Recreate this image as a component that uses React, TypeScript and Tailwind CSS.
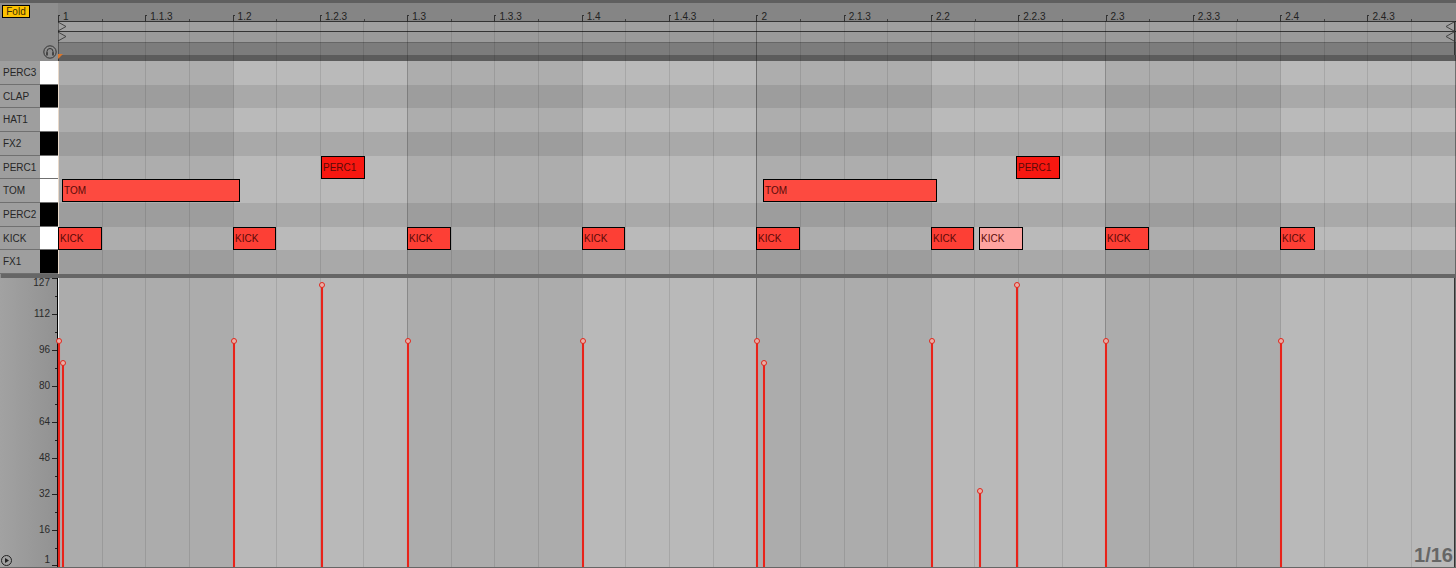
import React from 'react';

const font = { fontFamily: '"Liberation Sans", Arial, sans-serif' };

const COL = 43.65;
const ORIGIN = 58;

const marks = ['1', '1.1.3', '1.2', '1.2.3', '1.3', '1.3.3', '1.4', '1.4.3', '2', '2.1.3', '2.2', '2.2.3', '2.3', '2.3.3', '2.4', '2.4.3'];

const rows = [
  { name: 'PERC3', black: false },
  { name: 'CLAP', black: true },
  { name: 'HAT1', black: false },
  { name: 'FX2', black: true },
  { name: 'PERC1', black: false },
  { name: 'TOM', black: false },
  { name: 'PERC2', black: true },
  { name: 'KICK', black: false },
  { name: 'FX1', black: true },
];

const notes = [
  { row: 4, x: 321, w: 44, label: 'PERC1', color: 'bg-[#f81710]' },
  { row: 4, x: 1016, w: 44, label: 'PERC1', color: 'bg-[#f81710]' },
  { row: 5, x: 62, w: 178, label: 'TOM', color: 'bg-[#fd4a40]' },
  { row: 5, x: 763, w: 174, label: 'TOM', color: 'bg-[#fd4a40]' },
  { row: 7, x: 58, w: 44, label: 'KICK', color: 'bg-[#fd3f35]' },
  { row: 7, x: 233, w: 43, label: 'KICK', color: 'bg-[#fd3f35]' },
  { row: 7, x: 407, w: 44, label: 'KICK', color: 'bg-[#fd3f35]' },
  { row: 7, x: 582, w: 43, label: 'KICK', color: 'bg-[#fd3f35]' },
  { row: 7, x: 756, w: 44, label: 'KICK', color: 'bg-[#fd3f35]' },
  { row: 7, x: 931, w: 43, label: 'KICK', color: 'bg-[#fd3f35]' },
  { row: 7, x: 979, w: 44, label: 'KICK', color: 'bg-[#fea3a0]' },
  { row: 7, x: 1105, w: 44, label: 'KICK', color: 'bg-[#fd3f35]' },
  { row: 7, x: 1280, w: 35, label: 'KICK', color: 'bg-[#fd3f35]' },
];

const stems = [
  { x: 59, top: 341 },
  { x: 63, top: 363 },
  { x: 234, top: 341 },
  { x: 322, top: 285 },
  { x: 408, top: 341 },
  { x: 583, top: 341 },
  { x: 757, top: 341 },
  { x: 764, top: 363 },
  { x: 932, top: 341 },
  { x: 980, top: 491 },
  { x: 1017, top: 285 },
  { x: 1106, top: 341 },
  { x: 1281, top: 341 },
];

const scale = [
  { label: '127', y: 283 },
  { label: '112', y: 314 },
  { label: '96', y: 350 },
  { label: '80', y: 386 },
  { label: '64', y: 422 },
  { label: '48', y: 458 },
  { label: '32', y: 494 },
  { label: '16', y: 530 },
  { label: '1', y: 560 },
];

const majorTicks = [278, 314, 350, 386, 422, 458, 494, 530, 565];
const minorTicks = [296, 332, 368, 404, 440, 476, 512, 548];

function lineColor(i: number) {
  if (i % 16 === 0) return 'border-black/35';
  if (i % 8 === 0) return 'border-black/20';
  if (i % 4 === 0) return 'border-black/15';
  return 'border-black/10';
}

// every other beat is darker, grid lines every 16th
function Grid({ shade = true }: { shade?: boolean }) {
  return (
    <div className="absolute inset-0 flex">
      {Array.from({ length: 33 }).map((_, i) => {
        const dark = shade && Math.floor(i / 4) % 2 === 0;
        return (
          <div
            key={i}
            className={`shrink-0 border-l ${lineColor(i)} ${dark ? 'bg-black/[0.065]' : ''}`}
            style={{ width: COL }}
          />
        );
      })}
    </div>
  );
}

function Arrows() {
  return (
    <>
      <svg className="absolute left-0 top-0" width="10" height="10"><path d="M0 0L8 4.5L0 9" fill="none" stroke="#444" /></svg>
      <svg className="absolute right-[2px] top-0" width="10" height="10"><path d="M10 0L2 4.5L10 9" fill="none" stroke="#444" /></svg>
    </>
  );
}

export default function App() {
  return (
    <div className="w-[1456px] h-[568px] overflow-hidden flex flex-col bg-[#8f8f8f] text-[#2a2a2a]" style={font}>
      <div className="h-[3px] bg-[#5f5f5f]" />

      {/* ruler */}
      <div className="h-[58px] flex">
        <div className="w-[58px] bg-[#8e8e8e] relative pl-[2px] pt-[2px]">
          <div className="w-[28px] h-[13px] bg-[#fcc200] border border-black text-[10px] leading-[11px] text-center text-[#3a2c00]">
            Fold
          </div>
          <svg className="absolute left-[43px] top-[42px]" width="14" height="14" viewBox="0 0 14 14" fill="none">
            <circle cx="7" cy="7" r="6.2" stroke="#333" />
            <path d="M4 8V6.5a3 3 0 0 1 6 0V8" stroke="#333" />
            <rect x="3.2" y="7.5" width="1.6" height="3" fill="#333" />
            <rect x="9.2" y="7.5" width="1.6" height="3" fill="#333" />
          </svg>
        </div>
        <div className="flex-1 flex flex-col relative">
          <div className="h-[18px] bg-[#858585] flex">
            {marks.map((m) => (
              <div key={m} className="shrink-0 relative text-[10px] leading-[12px] pl-[5px] pt-[8px] text-[#222]" style={{ width: COL * 2 }}>
                <span className="absolute left-0 bottom-0 w-[2px] h-[6px] border-l border-t border-[#333]" />
                <span className="absolute bottom-0 h-[2px] border-l border-[#444]" style={{ left: COL }} />
                {m}
              </div>
            ))}
          </div>
          <div className="flex-1 relative flex flex-col">
            <div className="h-[11px] bg-[#a0a0a0] border-y border-[#333] relative"><Arrows /></div>
            <div className="h-[11px] bg-[#9a9a9a] border-b border-[#666] relative"><Arrows /></div>
            <div className="h-[12px] bg-[#7c7c7c]" />
            <div className="h-[6px] bg-[#5c5c5c]" />
            <Grid shade={false} />
            <svg className="absolute left-0 bottom-[1px]" width="6" height="6"><path d="M0 0H5L0 5Z" fill="#d9772c" /></svg>
          </div>
          <div className="absolute right-[1px] top-[18px] bottom-[6px] w-px bg-[#333]" />
        </div>
      </div>

      {/* note editor */}
      <div className="h-[213px] flex">
        <div className="w-[58px] flex flex-col">
          {rows.map((r) => (
            <div key={r.name} className="flex-1 flex border-b border-[#707070]">
              <div className="w-[40px] bg-[#9e9e9e] text-[10px] pl-[3px] flex items-center text-[#262626]">{r.name}</div>
              <div className={`w-[18px] ${r.black ? 'bg-black' : 'bg-white'}`} />
            </div>
          ))}
        </div>
        <div className="flex-1 relative overflow-hidden">
          <div className="absolute inset-0 flex flex-col">
            {rows.map((r) => (
              <div key={r.name} className={`flex-1 ${r.black ? 'bg-[#a9a9a9]' : 'bg-[#bababa]'}`} />
            ))}
          </div>
          <Grid />
          <div className="absolute left-0 inset-y-0 w-px bg-[#e8d8c8]" />
          {notes.map((n) => (
            <div
              key={n.x + n.label}
              className={`absolute h-[23px] border border-black text-[10px] leading-[21px] pl-[1px] text-[#5a0a08] ${n.color}`}
              style={{ left: n.x - ORIGIN, width: n.w, top: n.row * (213 / 9) }}
            >
              {n.label}
            </div>
          ))}
        </div>
      </div>

      <div className="h-[4px] bg-[#666] ml-px" />

      {/* velocity */}
      <div className="flex-1 flex relative border-b border-[#666]">
        <div className="w-[58px] bg-gradient-to-r from-[#a2a2a2] to-[#929292] border-r border-black" />
        <div className="flex-1 relative bg-[#b9b9b9] overflow-hidden">
          <Grid />
          <div className="absolute left-0 inset-y-0 w-px bg-[#f0f0f0]" />
          <div className="absolute right-[1px] inset-y-0 w-px bg-[#333]" />
          <div className="absolute right-[3px] bottom-[2px] text-[20px] font-bold leading-none text-[#666]">1/16</div>
        </div>
        {scale.map((s) => (
          <div key={s.label} className="absolute right-[1406px] text-[10px] leading-[10px] text-[#2a2a2a]" style={{ top: s.y - 278 - 5 }}>
            {s.label}
          </div>
        ))}
        {majorTicks.map((y) => (
          <div key={y} className="absolute right-[1399px] w-[5px] h-px bg-[#222]" style={{ top: y - 278 }} />
        ))}
        {minorTicks.map((y) => (
          <div key={y} className="absolute right-[1399px] w-[2px] h-px bg-[#222]" style={{ top: y - 278 }} />
        ))}
        {stems.map((s) => (
          <div key={s.x} className="absolute w-[2px] bg-[#e8231a] bottom-0 shadow-[0_0_1px_#f07070]" style={{ left: s.x - 1, top: s.top - 278 }}>
            <span className="absolute left-[-2px] top-[-3px] w-[6px] h-[6px] rounded-full border border-[#e0261c] bg-[#e8b0a8]" />
          </div>
        ))}
        <svg className="absolute left-[1px] bottom-[1px]" width="11" height="11" viewBox="0 0 11 11" fill="none">
          <circle cx="5.5" cy="5.5" r="5" stroke="#222" />
          <path d="M4 3L8 5.5L4 8Z" fill="#222" />
        </svg>
      </div>
    </div>
  );
}
